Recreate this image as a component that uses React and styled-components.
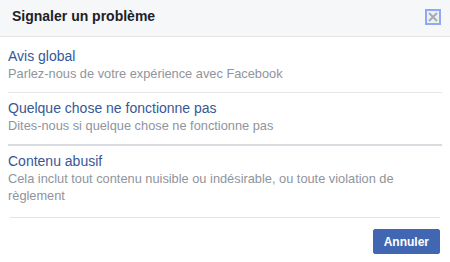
import React from "react";
import styled, { createGlobalStyle } from "styled-components";

const Global = createGlobalStyle`
  html, body { margin: 0; padding: 0; background: #fff; }
  body { font-family: "Liberation Sans", Arial, Helvetica, sans-serif; }
  * { box-sizing: border-box; }
`;

const Dialog = styled.div`
  width: 450px;
  height: 262px;
  background: #fff;
  display: flex;
  flex-direction: column;
`;

const Header = styled.div`
  height: 37px;
  background: #f6f7f9;
  border-bottom: 1px solid #e5e5e5;
  display: flex;
  align-items: flex-start;
  justify-content: space-between;
  padding: 7px 9px 0 12px;
`;

const Title = styled.h3`
  margin: 0;
  font-size: 14px;
  line-height: 18px;
  font-weight: bold;
  color: #1d2129;
`;

const Close = styled.button`
  width: 16px;
  height: 16px;
  margin-top: 2px;
  padding: 0;
  border: 2px solid #8eaaf6;
  background: #eef0f4;
  display: flex;
  align-items: center;
  justify-content: center;
  cursor: pointer;
`;

const List = styled.div`
  padding: 4px 8px 3px;
  display: flex;
  flex-direction: column;
`;

const Item = styled.a`
  display: block;
  padding: 7px 0 10px;
  border-bottom: ${(p) =>
    p.$last ? "none" : p.$strong ? "2px solid #d8dbdf" : "1px solid #e5e6e9"};
  text-decoration: none;
  cursor: pointer;
`;

const ItemTitle = styled.div`
  font-size: 14px;
  line-height: 17px;
  color: #365899;
`;

const ItemDesc = styled.div`
  font-size: 12.8px;
  line-height: 17px;
  color: #90949c;
`;

const Footer = styled.div`
  margin: 0 10px;
  border-top: 1px solid #e5e5e5;
  padding-top: 11px;
  display: flex;
  justify-content: flex-end;
`;

const Button = styled.button`
  height: 25px;
  padding: 0 10px;
  border: 1px solid #4267b2;
  border-radius: 2px;
  background: #4267b2;
  color: #fff;
  font-family: "Liberation Sans", Arial, Helvetica, sans-serif;
  font-size: 12px;
  font-weight: bold;
  cursor: pointer;
`;

const items = [
  { title: "Avis global", desc: "Parlez-nous de votre expérience avec Facebook" },
  {
    title: "Quelque chose ne fonctionne pas",
    desc: "Dites-nous si quelque chose ne fonctionne pas",
    strong: true,
  },
  {
    title: "Contenu abusif",
    desc: "Cela inclut tout contenu nuisible ou indésirable, ou toute violation de règlement",
    last: true,
  },
];

export default function App() {
  return (
    <>
      <Global />
      <Dialog>
        <Header>
          <Title>Signaler un problème</Title>
          <Close aria-label="Fermer">
            <svg width="10" height="10" viewBox="0 0 10 10">
              <path d="M1 1L9 9M9 1L1 9" stroke="#a7abb2" strokeWidth="2" />
            </svg>
          </Close>
        </Header>
        <List>
          {items.map((it) => (
            <Item key={it.title} $strong={it.strong} $last={it.last}>
              <ItemTitle>{it.title}</ItemTitle>
              <ItemDesc>{it.desc}</ItemDesc>
            </Item>
          ))}
        </List>
        <Footer>
          <Button>Annuler</Button>
        </Footer>
      </Dialog>
    </>
  );
}
